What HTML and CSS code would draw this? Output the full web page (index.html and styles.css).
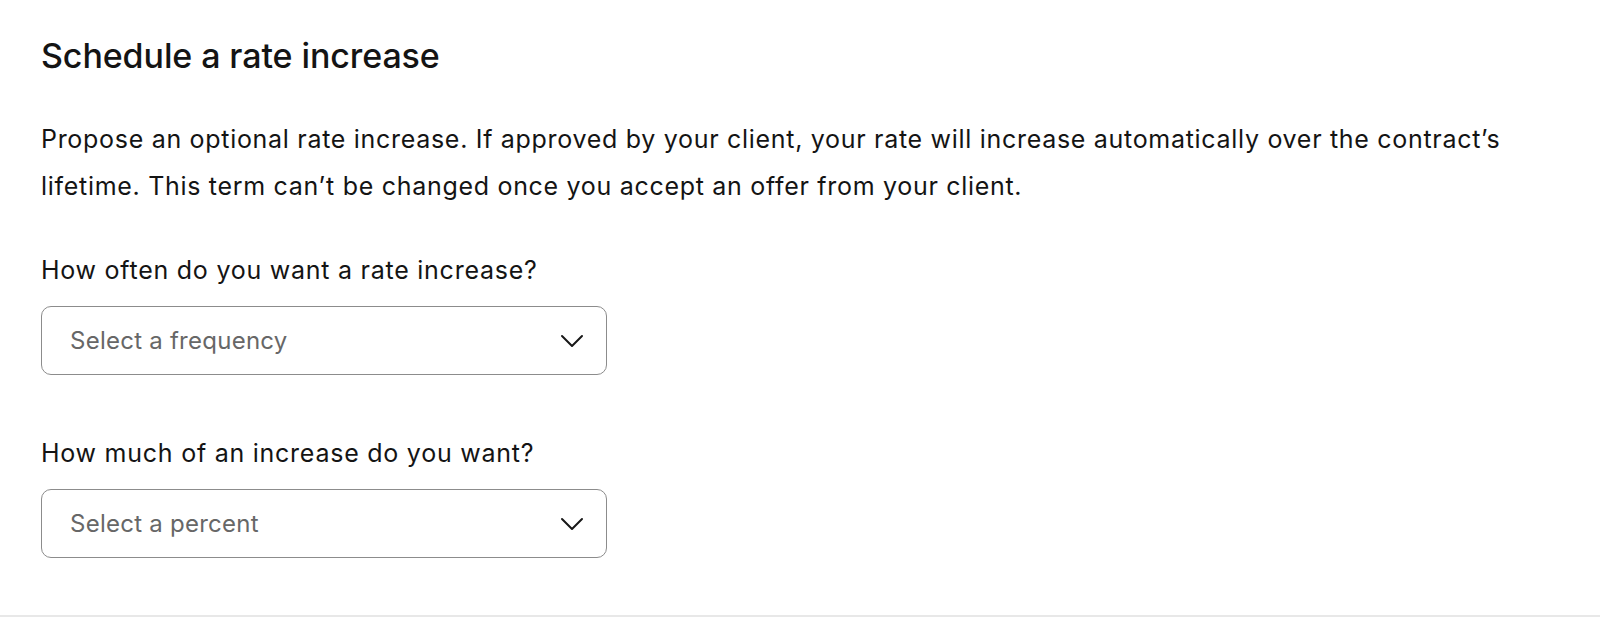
FILE: index.html
```html
<!DOCTYPE html>
<html lang="en">
<head>
    <meta charset="UTF-8">
    <meta name="viewport" content="width=device-width, initial-scale=1.0">
    <title>Schedule a rate increase</title>
    <link rel="stylesheet" href="styles.css">
</head>
<body>
    <section class="rate-section">
        <h2 class="section-title">Schedule a rate increase</h2>
        <p class="section-description">
            Propose an optional rate increase. If approved by your client, your rate will increase automatically over the contract’s
            lifetime. This term can’t be changed once you accept an offer from your client.
        </p>

        <div class="field">
            <label class="field-label" for="frequency">How often do you want a rate increase?</label>
            <div class="dropdown" id="frequency">
                <span class="dropdown-placeholder">Select a frequency</span>
                <svg class="dropdown-icon" viewBox="0 0 24 14" width="24" height="14" aria-hidden="true">
                    <path d="M2 2l10 10L22 2" fill="none" stroke="#181818" stroke-width="2" stroke-linecap="round" stroke-linejoin="round"/>
                </svg>
            </div>
        </div>

        <div class="field">
            <label class="field-label" for="percent">How much of an increase do you want?</label>
            <div class="dropdown" id="percent">
                <span class="dropdown-placeholder">Select a percent</span>
                <svg class="dropdown-icon" viewBox="0 0 24 14" width="24" height="14" aria-hidden="true">
                    <path d="M2 2l10 10L22 2" fill="none" stroke="#181818" stroke-width="2" stroke-linecap="round" stroke-linejoin="round"/>
                </svg>
            </div>
        </div>
    </section>
</body>
</html>
```

FILE: styles.css
```css
body {
    font-family: "Inter", "Liberation Sans", sans-serif;
    background-color: #ffffff;
    color: #141414;
    margin: 0;
    padding: 0;
}

.rate-section {
    padding: 36px 41px 57px;
    border-bottom: 2px solid #e8e8e8;
}

.section-title {
    font-size: 34px;
    font-weight: 500;
    line-height: 40px;
    margin: 0;
    letter-spacing: -0.1px;
}

.section-description {
    font-size: 25px;
    line-height: 47px;
    letter-spacing: 0.7px;
    margin: 40px 0 0;
    max-width: 1500px;
}

.field {
    margin-top: 42px;
}

.field + .field {
    margin-top: 60px;
}

.field-label {
    display: block;
    font-size: 25px;
    line-height: 36px;
    letter-spacing: 0.75px;
}

.dropdown {
    display: flex;
    align-items: center;
    justify-content: space-between;
    width: 566px;
    height: 69px;
    margin-top: 18px;
    padding: 0 22px 0 28px;
    border: 1px solid #8c8c8c;
    border-radius: 10px;
    box-sizing: border-box;
    cursor: pointer;
}

.dropdown-placeholder {
    font-size: 24px;
    letter-spacing: 0.25px;
    color: #676767;
}

.dropdown-icon {
    display: block;
}
```
